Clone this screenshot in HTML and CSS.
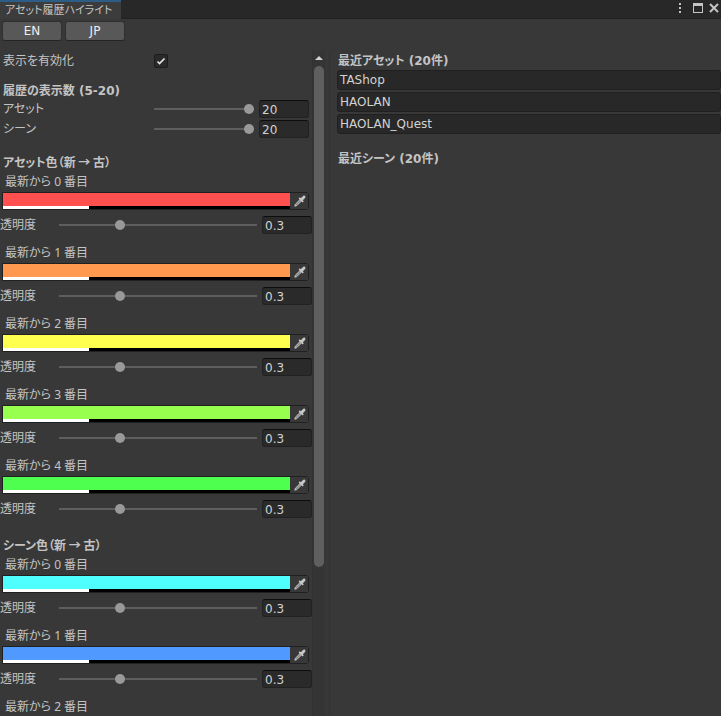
FILE: index.html
```html
<!DOCTYPE html>
<html lang="ja">
<head>
<meta charset="utf-8">
<title>アセット履歴ハイライト</title>
<link rel="stylesheet" href="styles.css">
</head>
<body>
<svg class="symbols" aria-hidden="true">
  <symbol id="dropper" viewBox="0 0 12 12">
    <path d="M.8 11.200l.6-2L6 4.600 7.400 6 2.800 10.600z" fill="#8a8a8a" stroke="#c4c4c4" stroke-width="1"/>
    <path d="M4.600 3.400l1.200-1.200 1 1L8.800 1.200c.8-.9 1.600-.8 2.200-.2s.7 1.400-.2 2.200l-2 2 1 1-1.200 1.200z" fill="#c8c8c8"/>
  </symbol>
</svg>
<div class="window">
  <header class="tabbar">
    <div class="tab">アセット履歴ハイライト</div>
    <div class="window-controls">
      <button type="button" class="dots" aria-label="メニュー"><svg width="4" height="12" viewBox="0 0 4 12" fill="#c4c4c4"><path d="M1 1h2v2H1zM1 5h2v2H1zM1 9h2v2H1z"/></svg></button>
      <button type="button" aria-label="最大化"><svg width="10" height="10" viewBox="0 0 10 10" fill="#c4c4c4"><path fill-rule="evenodd" d="M0 0h10v10H0zM1 3v6h8V3z"/></svg></button>
      <button type="button" aria-label="閉じる"><svg width="10" height="10" viewBox="0 0 10 10" fill="none" stroke="#c4c4c4" stroke-width="2"><path d="M1 1l8 8M9 1L1 9"/></svg></button>
    </div>
  </header>
  <nav class="languages">
    <button type="button">EN</button>
    <button type="button">JP</button>
  </nav>
  <main class="panes">
    <section class="settings">
      <div class="settings-content">
        <div class="row">
          <label class="row-label" for="enabled">表示を有効化</label>
          <input type="checkbox" id="enabled" checked>
        </div>
        <h2 class="count-title">履歴の表示数 (5-20)</h2>
        <div class="row">
          <label class="row-label" for="assets">アセット</label>
          <input type="range" id="assets" min="5" max="20" value="20">
          <input type="text" class="number" value="20" aria-label="アセット数">
        </div>
        <div class="row">
          <label class="row-label" for="scenes">シーン</label>
          <input type="range" id="scenes" min="5" max="20" value="20">
          <input type="text" class="number" value="20" aria-label="シーン数">
        </div>

        <h2 class="asset-title">アセット色<span class="order">（新 → 古）</span></h2>
        <div class="entry">
          <label class="entry-label" for="a0">最新から 0 番目</label>
          <div class="color-field"><div class="swatch"><input type="color" id="a0" value="#ff4f4f"><span class="alpha"></span></div><button type="button" aria-label="色を取得"><svg width="12" height="12"><use href="#dropper"/></svg></button></div>
          <div class="opacity"><label for="ao0">透明度</label><input type="range" id="ao0" min="0" max="1" step="0.01" value="0.3"><input type="text" class="number" value="0.3" aria-label="透明度の値"></div>
        </div>
        <div class="entry">
          <label class="entry-label" for="a1">最新から 1 番目</label>
          <div class="color-field"><div class="swatch"><input type="color" id="a1" value="#ff994f"><span class="alpha"></span></div><button type="button" aria-label="色を取得"><svg width="12" height="12"><use href="#dropper"/></svg></button></div>
          <div class="opacity"><label for="ao1">透明度</label><input type="range" id="ao1" min="0" max="1" step="0.01" value="0.3"><input type="text" class="number" value="0.3" aria-label="透明度の値"></div>
        </div>
        <div class="entry">
          <label class="entry-label" for="a2">最新から 2 番目</label>
          <div class="color-field"><div class="swatch"><input type="color" id="a2" value="#ffff4f"><span class="alpha"></span></div><button type="button" aria-label="色を取得"><svg width="12" height="12"><use href="#dropper"/></svg></button></div>
          <div class="opacity"><label for="ao2">透明度</label><input type="range" id="ao2" min="0" max="1" step="0.01" value="0.3"><input type="text" class="number" value="0.3" aria-label="透明度の値"></div>
        </div>
        <div class="entry">
          <label class="entry-label" for="a3">最新から 3 番目</label>
          <div class="color-field"><div class="swatch"><input type="color" id="a3" value="#99ff4f"><span class="alpha"></span></div><button type="button" aria-label="色を取得"><svg width="12" height="12"><use href="#dropper"/></svg></button></div>
          <div class="opacity"><label for="ao3">透明度</label><input type="range" id="ao3" min="0" max="1" step="0.01" value="0.3"><input type="text" class="number" value="0.3" aria-label="透明度の値"></div>
        </div>
        <div class="entry">
          <label class="entry-label" for="a4">最新から 4 番目</label>
          <div class="color-field"><div class="swatch"><input type="color" id="a4" value="#4fff4f"><span class="alpha"></span></div><button type="button" aria-label="色を取得"><svg width="12" height="12"><use href="#dropper"/></svg></button></div>
          <div class="opacity"><label for="ao4">透明度</label><input type="range" id="ao4" min="0" max="1" step="0.01" value="0.3"><input type="text" class="number" value="0.3" aria-label="透明度の値"></div>
        </div>

        <h2 class="scene-title">シーン色<span class="order">（新 → 古）</span></h2>
        <div class="entry">
          <label class="entry-label" for="s0">最新から 0 番目</label>
          <div class="color-field"><div class="swatch"><input type="color" id="s0" value="#4fffff"><span class="alpha"></span></div><button type="button" aria-label="色を取得"><svg width="12" height="12"><use href="#dropper"/></svg></button></div>
          <div class="opacity"><label for="so0">透明度</label><input type="range" id="so0" min="0" max="1" step="0.01" value="0.3"><input type="text" class="number" value="0.3" aria-label="透明度の値"></div>
        </div>
        <div class="entry">
          <label class="entry-label" for="s1">最新から 1 番目</label>
          <div class="color-field"><div class="swatch"><input type="color" id="s1" value="#4f99ff"><span class="alpha"></span></div><button type="button" aria-label="色を取得"><svg width="12" height="12"><use href="#dropper"/></svg></button></div>
          <div class="opacity"><label for="so1">透明度</label><input type="range" id="so1" min="0" max="1" step="0.01" value="0.3"><input type="text" class="number" value="0.3" aria-label="透明度の値"></div>
        </div>
        <div class="entry">
          <span class="entry-label">最新から 2 番目</span>
        </div>
      </div>
      <div class="scrollbar" aria-hidden="true">
        <svg class="scroll-up" width="8" height="4" viewBox="0 0 8 4"><path d="M4 0l4 4H0z" fill="#d2d2d2"/></svg>
        <div class="scroll-track"><div class="scroll-thumb"></div></div>
      </div>
    </section>
    <section class="history">
      <h2>最近アセット (20件)</h2>
      <ul>
        <li><button type="button">TAShop</button></li>
        <li><button type="button">HAOLAN</button></li>
        <li><button type="button">HAOLAN_Quest</button></li>
      </ul>
      <h2>最近シーン (20件)</h2>
    </section>
  </main>
</div>
</body>
</html>
```
FILE: styles.css
```css
* {
  box-sizing: border-box;
}

body {
  margin: 0;
  background: #383838;
  color: #c4c4c4;
  font: 12px/20px "DejaVu Sans", "Noto Sans CJK JP", sans-serif;
  font-feature-settings: "palt";
}

button,
input {
  margin: 0;
  padding: 0;
  border: 0;
  font: inherit;
  font-feature-settings: inherit;
  color: inherit;
}

h2 {
  margin: 0;
  font-size: 12px;
  font-weight: 700;
}

.symbols {
  display: none;
}

.window {
  display: flex;
  flex-direction: column;
  height: 100vh;
  overflow: hidden;
}

.tabbar {
  display: flex;
  justify-content: space-between;
  flex: none;
  height: 19px;
  background: linear-gradient(#282828 18px, #202020 18px);
}

.tab {
  padding: 0 9px 0 5px;
  border-top: 2px solid #2c5d87;
  background: #3c3c3c;
  font-size: 11px;
  line-height: 18px;
}

.window-controls {
  display: flex;
  align-items: center;
  gap: 6px;
  height: 16px;
  padding-right: 2px;
}

.window-controls button {
  display: flex;
  background: none;
}

.window-controls .dots {
  margin-right: 5px;
}

.languages {
  display: flex;
  gap: 3px;
  flex: none;
  padding: 2px 2px 10px;
}

.languages button {
  width: 60px;
  height: 20px;
  border: 1px solid #303030;
  border-bottom-color: #242424;
  border-radius: 3px;
  background: #585858;
  color: #eee;
  line-height: 18px;
}

.panes {
  display: flex;
  flex: 1;
  min-height: 0;
}

.settings {
  display: flex;
  flex: 0 0 325px;
  min-width: 0;
}

.settings-content {
  flex: 1;
  min-width: 0;
  overflow: hidden;
}

.row {
  display: flex;
  align-items: center;
  height: 20px;
  padding: 0 3px;
}

.row-label {
  flex: none;
  width: 151px;
}

.row input[type="range"] {
  flex: 1;
  margin-right: 5px;
}

.settings h2 {
  height: 20px;
  padding-left: 3px;
  line-height: 22px;
}

.settings .count-title {
  height: 19px;
  margin-top: 9px;
}

.order {
  font-family: "Noto Sans CJK JP", sans-serif;
  line-height: 1;
}

.asset-title {
  margin-top: 13px;
}

.scene-title {
  margin-top: 16px;
}

input[type="checkbox"] {
  appearance: none;
  width: 14px;
  height: 14px;
  border: 1px solid #1c1c1c;
  border-radius: 2px;
  background: #2a2a2a url("data:image/svg+xml,%3Csvg xmlns='http://www.w3.org/2000/svg' viewBox='0 0 12 12'%3E%3Cpath d='M2.500 6.500l2 2L9.500 3.500' fill='none' stroke='%23e8e8e8' stroke-width='1.600'/%3E%3C/svg%3E");
}

input[type="range"] {
  appearance: none;
  width: 0;
  min-width: 0;
  height: 10px;
  background: linear-gradient(#5e5e5e, #5e5e5e) center / 100% 2px no-repeat;
}

input[type="range"]::-webkit-slider-thumb {
  appearance: none;
  width: 10px;
  height: 10px;
  border-radius: 50%;
  background: #999;
}

.number {
  flex: none;
  width: 50px;
  height: 18px;
  padding: 1px 2px 0;
  border: 1px solid #212121;
  border-top-color: #0d0d0d;
  border-radius: 3px;
  background: #2a2a2a;
  color: #d2d2d2;
}

.entry {
  display: flex;
  flex-direction: column;
  margin-bottom: 8px;
}

.entry-label {
  height: 20px;
  padding-left: 5px;
  font-family: "Noto Sans", "Noto Sans CJK JP", sans-serif;
  line-height: 20px;
}

.color-field {
  display: flex;
  height: 18px;
  margin: 0 3px 0 2px;
  border: 1px solid #202020;
  border-radius: 0 3px 3px 0;
}

.swatch {
  display: flex;
  flex: 1;
  flex-direction: column;
}

input[type="color"] {
  appearance: none;
  width: 100%;
  height: 13px;
  background: none;
}

input[type="color"]::-webkit-color-swatch-wrapper {
  padding: 0;
}

input[type="color"]::-webkit-color-swatch {
  border: 0;
  border-radius: 0;
}

.alpha {
  flex: 1;
  background: linear-gradient(90deg, #fff 30%, #000 30%);
}

.color-field button {
  display: flex;
  align-items: center;
  justify-content: center;
  width: 18px;
  padding-left: 2px;
  background: #383838;
}

.opacity {
  display: flex;
  align-items: center;
  height: 20px;
  margin-top: 5px;
}

.opacity label {
  flex: none;
  width: 59px;
}

.opacity input[type="range"] {
  flex: 1;
  margin-right: 5px;
}

.scrollbar {
  display: flex;
  flex: none;
  flex-direction: column;
  align-items: center;
  width: 13px;
  border-left: 1px solid #323232;
  background: #353535;
}

.scroll-up {
  flex: none;
  margin: 5px 0 6px;
}

.scroll-track {
  flex: 1;
  width: 10px;
}

.scroll-thumb {
  height: 77%;
  border-radius: 5px;
  background: #5f5f5f;
}

.history {
  flex: 1;
  min-width: 0;
  margin-left: 4px;
  padding-left: 7px;
  border-left: 1px solid #333;
}

.history h2 {
  height: 19px;
  padding-left: 1px;
  line-height: 20px;
}

.history ul {
  display: grid;
  gap: 2px;
  margin: 0 0 15px;
  padding: 0;
  list-style: none;
}

.history li {
  display: flex;
}

.history li button {
  flex: 1;
  height: 20px;
  padding: 0 2px;
  border: 1px solid #202020;
  border-radius: 3px;
  background: #282828;
  color: #d2d2d2;
  text-align: left;
  line-height: 18px;
}
```
